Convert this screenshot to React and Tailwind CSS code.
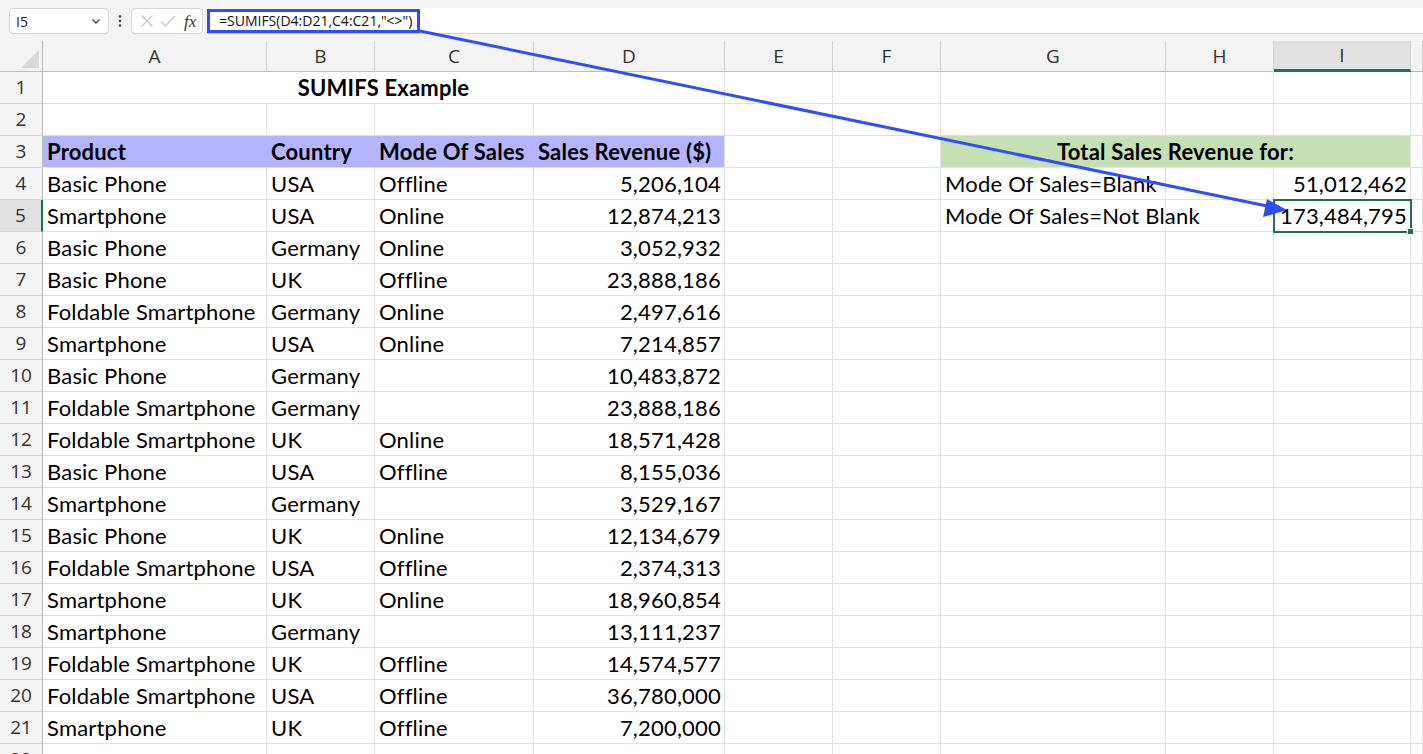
import React from "react";

const COLS = ["A", "B", "C", "D", "E", "F", "G", "H", "I", ""];
const data = [
  ["Basic Phone", "USA", "Offline", "5,206,104"],
  ["Smartphone", "USA", "Online", "12,874,213"],
  ["Basic Phone", "Germany", "Online", "3,052,932"],
  ["Basic Phone", "UK", "Offline", "23,888,186"],
  ["Foldable Smartphone", "Germany", "Online", "2,497,616"],
  ["Smartphone", "USA", "Online", "7,214,857"],
  ["Basic Phone", "Germany", "", "10,483,872"],
  ["Foldable Smartphone", "Germany", "", "23,888,186"],
  ["Foldable Smartphone", "UK", "Online", "18,571,428"],
  ["Basic Phone", "USA", "Offline", "8,155,036"],
  ["Smartphone", "Germany", "", "3,529,167"],
  ["Basic Phone", "UK", "Online", "12,134,679"],
  ["Foldable Smartphone", "USA", "Offline", "2,374,313"],
  ["Smartphone", "UK", "Online", "18,960,854"],
  ["Smartphone", "Germany", "", "13,111,237"],
  ["Foldable Smartphone", "UK", "Offline", "14,574,577"],
  ["Foldable Smartphone", "USA", "Offline", "36,780,000"],
  ["Smartphone", "UK", "Offline", "7,200,000"],
];

const cellFont = { fontFamily: "Lato, 'Open Sans', sans-serif" };

function RowHead({ n, selected }) {
  return (
    <div
      className={
        "h-[32px] flex items-center justify-center text-[19px] text-[#333] border-b border-[#d4d4d4] " +
        (selected
          ? "bg-[#e1e1e1] border-r-[2px] border-r-[#217346]"
          : "bg-[#f3f3f3] border-r border-r-[#bdbdbd]")
      }
      style={{ fontFamily: "'Open Sans', sans-serif" }}
    >
      {n}
    </div>
  );
}

function Cell({ children, right, className = "", span }) {
  return (
    <div
      className={
        "h-[32px] flex items-center px-[4px] text-[22px] tracking-[0.2px] text-black whitespace-nowrap overflow-visible border-r border-b border-[#e1e1e1] " +
        (right ? "justify-end pr-[3px] " : "") +
        className
      }
      style={span ? { gridColumn: `span ${span} / span ${span}`, ...cellFont } : cellFont}
    >
      {children}
    </div>
  );
}

function EmptyCells({ count }) {
  return Array.from({ length: count }).map((_, i) => <Cell key={i} />);
}

export default function App() {
  return (
    <div className="relative w-[1423px] h-[754px] overflow-hidden bg-white">
      {/* formula bar */}
      <div className="h-[41px] bg-[#f3f3f3] flex items-start pt-[8px] pl-[9px]" style={{ fontFamily: "'Open Sans', sans-serif" }}>
        <div className="w-[100px] h-[26px] bg-white border border-[#d6d6d6] rounded-[4px] flex items-center justify-between pl-[6px] pr-[6px] text-[14px] text-[#222]">
          <span>I5</span>
          <svg width="12" height="12" viewBox="0 0 12 12" fill="none" stroke="#444" strokeWidth="1.4">
            <path d="M2.5 4.5 L6 8 L9.5 4.5" />
          </svg>
        </div>
        <div className="w-[22px] h-[26px] flex items-center justify-center">
          <svg width="4" height="14" viewBox="0 0 4 14" fill="#444">
            <circle cx="2" cy="2.5" r="1.3" />
            <circle cx="2" cy="7" r="1.3" />
            <circle cx="2" cy="11.5" r="1.3" />
          </svg>
        </div>
        <div className="w-[72px] h-[26px] bg-white border border-[#d6d6d6] rounded-[4px] flex items-center pl-[8px] gap-[6px]">
          <svg width="14" height="14" viewBox="0 0 14 14" stroke="#c4c4c4" strokeWidth="1.2" fill="none">
            <path d="M1.5 1.5 L12.5 12.5 M12.5 1.5 L1.5 12.5" />
          </svg>
          <svg width="16" height="14" viewBox="0 0 16 14" stroke="#c4c4c4" strokeWidth="1.2" fill="none">
            <path d="M1 7.5 L5.5 12 L15 2" />
          </svg>
          <span className="text-[17px] italic text-[#333] ml-[2px] leading-none" style={{ fontFamily: "'Liberation Serif', serif" }}>
            fx
          </span>
        </div>
        <div className="ml-[4px] flex-1 h-[26px] bg-white border-b border-[#d6d6d6] flex items-center">
          <div className="h-[24px] border-[3px] border-[#2f4dff] flex items-center pl-[9px] pr-[5px] text-[14px] text-[#111]">
            =SUMIFS(D4:D21,C4:C21,"&lt;&gt;")
          </div>
        </div>
      </div>

      {/* grid */}
      <div className="grid grid-cols-[43px_224px_108px_159px_191px_108px_108px_225px_108px_137px_12px]">
        {/* corner */}
        <div className="h-[31px] bg-[#f3f3f3] border-r border-b border-[#bdbdbd] relative">
          <svg className="absolute right-[3px] bottom-[3px]" width="18" height="18" viewBox="0 0 18 18">
            <path d="M18 0 L18 18 L0 18 Z" fill="#d9d9d9" />
          </svg>
        </div>
        {COLS.map((c, i) => (
          <div
            key={i}
            className={
              "h-[31px] flex items-center justify-center text-[19px] text-[#333] border-r border-[#d4d4d4] " +
              (c === "I"
                ? "bg-[#e1e1e1] border-b-[3px] border-b-[#217346]"
                : "bg-[#f3f3f3] border-b border-b-[#bdbdbd]")
            }
            style={{ fontFamily: "'Open Sans', sans-serif" }}
          >
            {c}
          </div>
        ))}

        {/* row 1 */}
        <RowHead n={1} />
        <Cell span={4} className="justify-center font-bold">SUMIFS Example</Cell>
        <EmptyCells count={6} />

        {/* row 2 */}
        <RowHead n={2} />
        <EmptyCells count={10} />

        {/* row 3 */}
        <RowHead n={3} />
        <Cell className="bg-[#b4b4ff] border-r-[#b4b4ff] font-bold">Product</Cell>
        <Cell className="bg-[#b4b4ff] border-r-[#b4b4ff] font-bold">Country</Cell>
        <Cell className="bg-[#b4b4ff] border-r-[#b4b4ff] font-bold">Mode Of Sales</Cell>
        <Cell className="bg-[#b4b4ff] font-bold">Sales Revenue ($)</Cell>
        <EmptyCells count={2} />
        <Cell span={3} className="bg-[#c6e0b4] justify-center font-bold">Total Sales Revenue for:</Cell>
        <Cell />

        {data.map((r, i) => {
          const n = i + 4;
          return (
            <React.Fragment key={n}>
              <RowHead n={n} selected={n === 5} />
              <Cell>{r[0]}</Cell>
              <Cell>{r[1]}</Cell>
              <Cell>{r[2]}</Cell>
              <Cell right>{r[3]}</Cell>
              <Cell />
              <Cell />
              {n === 4 ? (
                <>
                  <Cell>Mode Of Sales=Blank</Cell>
                  <Cell />
                  <Cell right>51,012,462</Cell>
                </>
              ) : n === 5 ? (
                <>
                  <Cell>Mode Of Sales=Not Blank</Cell>
                  <Cell />
                  <Cell right className="relative outline outline-[2px] outline-[#217346] -outline-offset-1">
                    173,484,795
                    <span className="absolute right-[-4px] bottom-[-4px] w-[7px] h-[7px] bg-[#217346] border border-white" />
                  </Cell>
                </>
              ) : (
                <EmptyCells count={3} />
              )}
              <Cell />
            </React.Fragment>
          );
        })}

        {/* row 22 */}
        <RowHead n={22} />
        <EmptyCells count={10} />
      </div>

      {/* arrow overlay */}
      <svg className="absolute left-0 top-0 pointer-events-none" width="1423" height="754">
        <line x1="420" y1="31" x2="1272" y2="207" stroke="#2f4dff" strokeWidth="3" />
        <path d="M1287 210 L1267 199 L1263 217 Z" fill="#2f4dff" />
      </svg>
    </div>
  );
}
